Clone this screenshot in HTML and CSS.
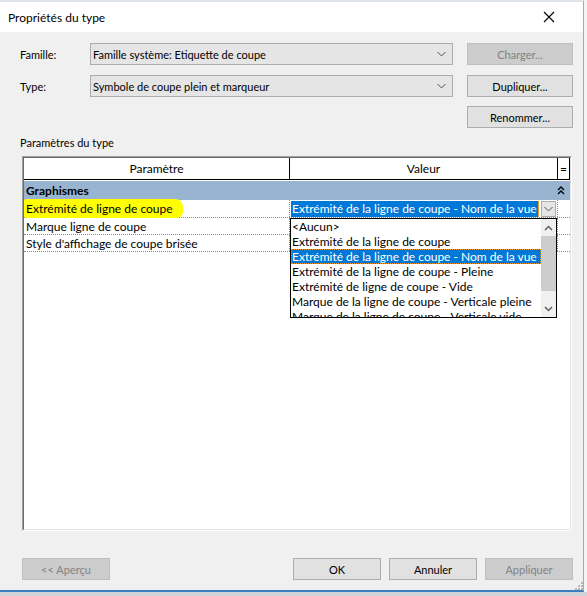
FILE: index.html
```html
<!DOCTYPE html>
<html lang="fr">
<head>
<meta charset="utf-8">
<title>Propriétés du type</title>
<link rel="stylesheet" href="styles.css">
</head>
<body>
<div class="window">
  <div class="titlebar">
    <span class="title">Propriétés du type</span>
    <svg class="close" width="12" height="12" viewBox="0 0 12 12"><path d="M1 1 L11 11 M11 1 L1 11" stroke="#000" stroke-width="1.1" fill="none"/></svg>
  </div>
  <div class="content">
    <div class="row">
      <span class="label">Famille:</span>
      <div class="combo"><span>Famille système: Etiquette de coupe</span><svg width="9" height="6" viewBox="0 0 9 6"><path d="M0.5 1 L4.5 5 L8.5 1" stroke="#555" fill="none"/></svg></div>
      <div class="btn disabled">Charger...</div>
    </div>
    <div class="row r2">
      <span class="label">Type:</span>
      <div class="combo"><span>Symbole de coupe plein et marqueur</span><svg width="9" height="6" viewBox="0 0 9 6"><path d="M0.5 1 L4.5 5 L8.5 1" stroke="#555" fill="none"/></svg></div>
      <div class="btn">Dupliquer...</div>
    </div>
    <div class="row r3">
      <div class="btn">Renommer...</div>
    </div>
    <div class="section-label">Paramètres du type</div>
    <div class="grid">
      <div class="inner">
        <div class="head">
          <div class="hc c1">Paramètre</div>
          <div class="hc c2">Valeur</div>
          <div class="hc c3">=</div>
        </div>
        <div class="group">
          <span>Graphismes</span>
          <svg width="8" height="9" viewBox="0 0 8 9"><path d="M1 4 L4 1 L7 4 M1 8 L4 5 L7 8" stroke="#000" stroke-width="1.4" fill="none"/></svg>
        </div>
        <div class="drow first">
          <div class="dc c1"><span class="hl">Extrémité de ligne de coupe</span></div>
          <div class="dc c2 val">
            <span class="sel">Extrémité de la ligne de coupe - Nom de la vue</span>
            <span class="dd"><svg width="9" height="6" viewBox="0 0 9 6"><path d="M0.5 1 L4.5 5 L8.5 1" stroke="#555" fill="none"/></svg></span>
            <div class="list">
              <div class="items">
                <div class="it">&lt;Aucun&gt;</div>
                <div class="it">Extrémité de la ligne de coupe</div>
                <div class="it on">Extrémité de la ligne de coupe - Nom de la vue</div>
                <div class="it">Extrémité de la ligne de coupe - Pleine</div>
                <div class="it">Extrémité de ligne de coupe - Vide</div>
                <div class="it">Marque de la ligne de coupe - Verticale pleine</div>
                <div class="it">Marque de la ligne de coupe - Verticale vide</div>
              </div>
              <div class="sb">
                <div class="arr"><svg width="9" height="6" viewBox="0 0 9 6"><path d="M1 5 L4.5 1.5 L8 5" stroke="#606060" stroke-width="1.5" fill="none"/></svg></div>
                <div class="thumb"></div>
                <div class="track"></div>
                <div class="arr"><svg width="9" height="6" viewBox="0 0 9 6"><path d="M1 1 L4.5 4.5 L8 1" stroke="#606060" stroke-width="1.5" fill="none"/></svg></div>
              </div>
            </div>
          </div>
          <div class="dc c3"></div>
        </div>
        <div class="drow">
          <div class="dc c1">Marque ligne de coupe</div>
          <div class="dc c2"></div>
          <div class="dc c3"></div>
        </div>
        <div class="drow">
          <div class="dc c1">Style d'affichage de coupe brisée</div>
          <div class="dc c2"></div>
          <div class="dc c3"></div>
        </div>
      </div>
    </div>
    <div class="footer">
      <div class="btn fbtn disabled">&lt;&lt; Aperçu</div>
      <div class="spacer"></div>
      <div class="btn fbtn">OK</div>
      <div class="btn fbtn">Annuler</div>
      <div class="btn fbtn disabled">Appliquer</div>
    </div>
    <div class="grip">
      <svg width="9" height="9" viewBox="0 0 9 9" fill="#b5b5b5"><rect x="7" y="1" width="2" height="2"/><rect x="4" y="4" width="2" height="2"/><rect x="7" y="4" width="2" height="2"/><rect x="1" y="7" width="2" height="2"/><rect x="4" y="7" width="2" height="2"/><rect x="7" y="7" width="2" height="2"/></svg>
    </div>
  </div>
</div>
<div class="below"></div>
</body>
</html>
```
FILE: styles.css
```css
* { box-sizing: border-box; }
html, body { margin: 0; padding: 0; }
body {
  width: 587px;
  height: 596px;
  overflow: hidden;
  background: #f4f4f4;
  font-family: Lato, "Noto Sans", "Liberation Sans", sans-serif;
  font-size: 11px;
  color: #000;
}
.window {
  width: 584px;
  height: 592px;
  border-top: 2px solid #dfe4ea;
  border-right: 1px solid #a9a9a9;
  border-bottom: 2px solid #3d7dbf;
  background: #f0f0f0;
  display: flex;
  flex-direction: column;
}
.titlebar {
  height: 30px;
  background: #fff;
  display: flex;
  align-items: center;
  justify-content: space-between;
  padding: 0 28px 0 8px;
  flex-shrink: 0;
}
.title { font-size: 12px; }
.content {
  flex: 1;
  padding: 11px 10px 0 20px;
  display: flex;
  flex-direction: column;
  position: relative;
}
.row { display: flex; align-items: center; height: 22px; }
.r2 { margin-top: 10px; }
.r3 { margin-top: 9px; justify-content: flex-end; }
.label { width: 70px; }
.combo {
  width: 363px;
  height: 22px;
  background: #e5e5e5;
  border: 1px solid #adadad;
  display: flex;
  align-items: center;
  justify-content: space-between;
  padding: 0 6px 0 2px;
  margin-right: 14px;
}
.btn {
  width: 106px;
  height: 22px;
  background: #e1e1e1;
  border: 1px solid #adadad;
  display: flex;
  align-items: center;
  justify-content: center;
}
.btn.disabled { background: #cccccc; border-color: #bfbfbf; color: #838383; }
.section-label { margin-top: 8px; height: 14px; line-height: 14px; }
.grid {
  margin: 6px 0 0 2px;
  width: 550px;
  height: 375px;
  border: 1px solid;
  border-color: #a0a0a0 #ffffff #ffffff #a0a0a0;
  background: #fff;
}
.inner {
  height: 100%;
  border: 1px solid;
  border-color: #696969 #e3e3e3 #e3e3e3 #696969;
  font-size: 12px;
}
.head { display: flex; height: 22px; border-bottom: 1px solid #000; }
.hc { display: flex; align-items: center; justify-content: center; border-right: 1px solid #000; background: #fff; }
.c1 { width: 266px; }
.c2 { width: 268px; }
.c3 { width: 12px; }
.group {
  margin-top: 1px;
  height: 19px;
  background: #99b4d1;
  display: flex;
  align-items: center;
  justify-content: space-between;
  padding: 0 5px 0 2px;
  font-weight: bold;
}
.drow { display: flex; height: 17px; border-bottom: 1px dotted #8a8a8a; }
.drow.first { height: 18px; }
.dc { display: flex; align-items: center; padding-left: 2px; white-space: nowrap; }
.dc.c1, .dc.c2 { border-right: 1px dotted #8a8a8a; }
.hl {
  background: #ffff00;
  margin-left: -2px;
  padding: 2px 10px 2px 2px;
  border-radius: 2px 8px 6px 2px;
}
.val { position: relative; padding-left: 1px; }
.sel {
  background: #0078d7;
  color: #fff;
  padding: 0 1px;
  border-right: 1px solid #f39a2c;
  height: 16px;
  line-height: 16px;
}
.dd {
  margin-left: 2px;
  width: 15px;
  height: 16px;
  background: #e5e5e5;
  border: 1px solid #adadad;
  display: flex;
  align-items: center;
  justify-content: center;
}
.list {
  position: absolute;
  left: 0;
  top: 18px;
  width: 267px;
  height: 100px;
  border: 1px solid #000;
  background: #fff;
  display: flex;
  z-index: 2;
  overflow: hidden;
}
.items { flex: 1; overflow: hidden; }
.it { height: 15px; line-height: 15px; white-space: nowrap; padding-left: 1px; }
.it.on { background: #0078d7; color: #fff; outline: 1px dotted #f39a2c; outline-offset: -1px; }
.sb { width: 15px; display: flex; flex-direction: column; background: #f0f0f0; }
.arr { height: 17px; display: flex; align-items: center; justify-content: center; }
.thumb { height: 55px; background: #cdcdcd; }
.track { flex: 1; }
.footer { display: flex; margin-top: 27px; margin-left: 2px; gap: 8px; }
.fbtn { width: 88px; }
.spacer { flex: 1; }
.grip { position: absolute; right: 0; bottom: 0; line-height: 0; }
.below { height: 4px; background: #cfd3d8; }
```
